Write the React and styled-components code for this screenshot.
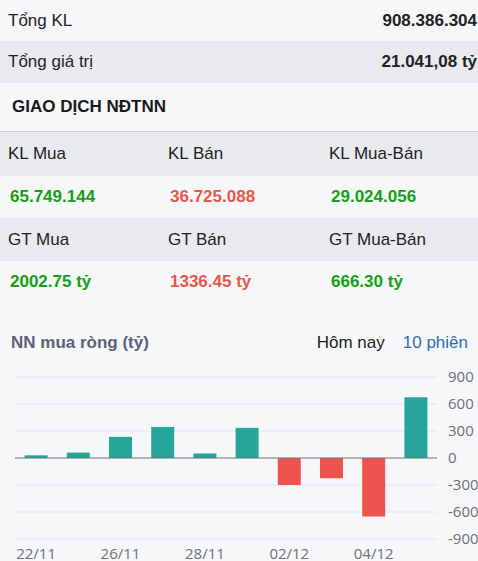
import React from "react";
import styled, { createGlobalStyle } from "styled-components";

const GlobalStyle = createGlobalStyle`
  html, body {
    margin: 0;
    padding: 0;
    background: #f6f7f9;
  }
  body {
    font-family: "Liberation Sans", Arial, sans-serif;
    color: #222;
  }
`;

const Page = styled.div`
  width: 478px;
  height: 561px;
  overflow: hidden;
  background: #f6f7f9;
`;

const SummaryRow = styled.div`
  display: flex;
  justify-content: space-between;
  align-items: center;
  height: ${props => props.h}px;
  padding: 0 1px 0 8px;
  background: ${props => (props.shaded ? "#e8eaee" : "transparent")};
  font-size: 17px;
`;

const SummaryValue = styled.span`
  font-weight: bold;
  color: #222;
`;

const SectionTitle = styled.div`
  height: 48px;
  display: flex;
  align-items: center;
  padding-left: 12px;
  font-size: 17px;
  font-weight: bold;
  color: #1a1a1a;
`;

const Table = styled.div`
  border-top: 1px solid #c9cdd3;
`;

const TableRow = styled.div`
  display: grid;
  grid-template-columns: 160px 161px 1fr;
  align-items: center;
  height: ${props => props.h}px;
  padding-left: ${props => (props.head ? 8 : 10)}px;
  background: ${props => (props.head ? "#e8eaee" : "transparent")};
  font-size: 17px;
`;

const Label = styled.span`
  color: #222;
`;

const Value = styled.span`
  font-weight: bold;
  color: ${props => (props.down ? "#e5574b" : "#15a015")};
`;

const ChartHeader = styled.div`
  display: flex;
  align-items: center;
  justify-content: space-between;
  margin-top: 27px;
  height: 26px;
  padding: 0 10px 0 11px;
  font-size: 17px;
`;

const ChartTitle = styled.span`
  font-weight: bold;
  color: #5b6275;
`;

const Tabs = styled.div`
  display: flex;
  gap: 18px;
`;

const Tab = styled.span`
  color: ${props => (props.active ? "#2f6cb3" : "#222")};
`;

const ChartSvg = styled.svg`
  display: block;
  margin-top: 4px;
  font-family: "Open Sans", "DejaVu Sans", sans-serif;
`;

const bars = [
  { d: "22/11", v: 30 },
  { d: "25/11", v: 60 },
  { d: "26/11", v: 235 },
  { d: "27/11", v: 345 },
  { d: "28/11", v: 50 },
  { d: "29/11", v: 335 },
  { d: "02/12", v: -300 },
  { d: "03/12", v: -225 },
  { d: "04/12", v: -650 },
  { d: "05/12", v: 675 }
];

const ticks = [900, 600, 300, 0, -300, -600, -900];

const Chart = () => {
  const x0 = 15;
  const x1 = 437;
  const zeroY = 98;
  const step = 27;
  const band = (x1 - x0) / bars.length;
  const scale = step / 300;
  return (
    <ChartSvg width="478" height="205" viewBox="0 0 478 205">
      {ticks.map(t => {
        const y = zeroY - (t / 300) * step;
        return (
          <g key={t}>
            {t !== 0 && (
              <line x1={x0} x2={x1} y1={y} y2={y} stroke="#e3e6ec" strokeWidth="1" />
            )}
            <text x="448" y={y + 5} fontSize="15" fill="#6e7079">
              {t}
            </text>
          </g>
        );
      })}
      {bars.map((b, i) => {
        const cx = x0 + band * (i + 0.5);
        const h = Math.abs(b.v) * scale;
        const y = b.v >= 0 ? zeroY - h : zeroY;
        return (
          <rect
            key={b.d}
            x={cx - 11.5}
            y={y}
            width="23"
            height={h}
            fill={b.v >= 0 ? "#26a69a" : "#ef5350"}
          />
        );
      })}
      <line x1={x0} x2={x1} y1={zeroY} y2={zeroY} stroke="#6e7079" strokeWidth="1" />
      {bars.map((b, i) =>
        i % 2 === 0 ? (
          <text
            key={b.d}
            x={x0 + band * (i + 0.5)}
            y="199"
            fontSize="15"
            fill="#6e7079"
            textAnchor="middle"
          >
            {b.d}
          </text>
        ) : null
      )}
    </ChartSvg>
  );
};

export default function App() {
  return (
    <Page>
      <GlobalStyle />
      <SummaryRow h={41}>
        <span>Tổng KL</span>
        <SummaryValue>908.386.304</SummaryValue>
      </SummaryRow>
      <SummaryRow h={42} shaded>
        <span>Tổng giá trị</span>
        <SummaryValue>21.041,08 tỷ</SummaryValue>
      </SummaryRow>
      <SectionTitle>GIAO DỊCH NĐTNN</SectionTitle>
      <Table>
        <TableRow head h={44}>
          <Label>KL Mua</Label>
          <Label>KL Bán</Label>
          <Label>KL Mua-Bán</Label>
        </TableRow>
        <TableRow h={42}>
          <Value>65.749.144</Value>
          <Value down>36.725.088</Value>
          <Value>29.024.056</Value>
        </TableRow>
        <TableRow head h={43}>
          <Label>GT Mua</Label>
          <Label>GT Bán</Label>
          <Label>GT Mua-Bán</Label>
        </TableRow>
        <TableRow h={42}>
          <Value>2002.75 tỷ</Value>
          <Value down>1336.45 tỷ</Value>
          <Value>666.30 tỷ</Value>
        </TableRow>
      </Table>
      <ChartHeader>
        <ChartTitle>NN mua ròng (tỷ)</ChartTitle>
        <Tabs>
          <Tab>Hôm nay</Tab>
          <Tab active>10 phiên</Tab>
        </Tabs>
      </ChartHeader>
      <Chart />
    </Page>
  );
}
